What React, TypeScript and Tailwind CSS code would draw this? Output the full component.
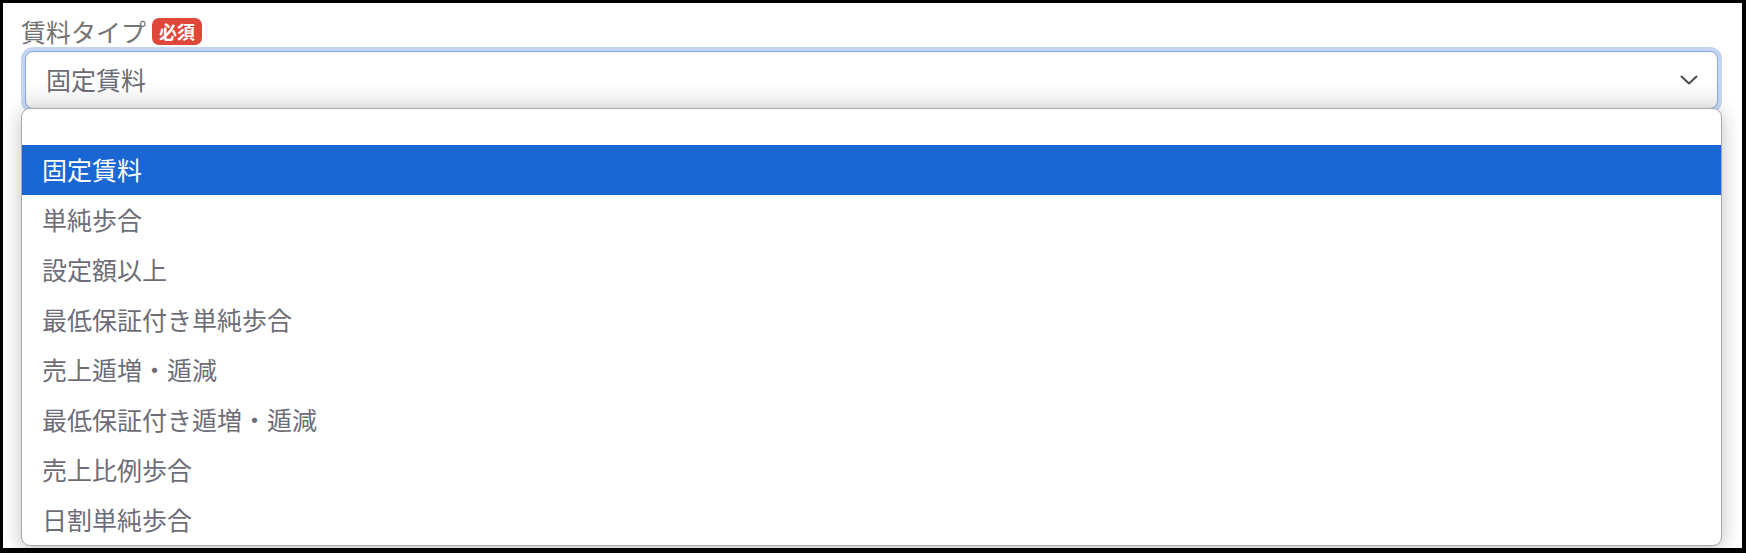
import React from "react";

const options = [
  "",
  "固定賃料",
  "単純歩合",
  "設定額以上",
  "最低保証付き単純歩合",
  "売上遁増・遁減",
  "最低保証付き遁増・遁減",
  "売上比例歩合",
  "日割単純歩合",
];

export default function App() {
  return (
    <div
      className="w-[1746px] h-[553px] bg-black pt-[3px] pl-[3px] pr-[4px] pb-[5px]"
      style={{ fontFamily: '"Noto Sans CJK JP", "Noto Sans", sans-serif' }}
    >
      <div className="relative w-full h-full bg-white overflow-hidden">
        <div className="flex flex-col pl-[18px] pr-[20px] pt-[13px]">
          <div className="flex items-center gap-[6px] h-[30px]">
            <span className="text-[25px] leading-[30px] text-[#737373]">賃料タイプ</span>
            <span className="flex items-center justify-center h-[27px] px-[7px] rounded-[7px] bg-[#e0473b] text-white text-[18px] font-bold leading-none">
              必須
            </span>
          </div>
          <div className="mt-[1px] rounded-[12px] p-[4px] bg-[#c3d5f1]">
            <div className="flex items-center justify-between h-[58px] rounded-[8px] border border-[#87a9df] bg-gradient-to-b from-white via-white to-[#f1f1f1] pl-[20px] pr-[19px]">
              <span className="text-[25px] text-[#6b6b73]">固定賃料</span>
              <svg width="18" height="10" viewBox="0 0 18 10" fill="none">
                <path d="M1.5 1.5 L9 8.5 L16.5 1.5" stroke="#4a4a4f" strokeWidth="2" strokeLinecap="round" strokeLinejoin="round" />
              </svg>
            </div>
          </div>
        </div>
        <div className="absolute left-[18px] top-[105px] w-[1701px] h-[438px] rounded-[9px] border border-[#a9a9a9] bg-white overflow-hidden shadow-[0_4px_20px_rgba(0,0,0,0.25)]">
          <div className="-mt-[14px]">
            {options.map((o, i) => (
              <div
                key={i}
                className={
                  i === 1
                    ? "h-[50px] flex items-center pl-[20px] bg-[#1a66d3] text-white text-[25px]"
                    : "h-[50px] flex items-center pl-[20px] text-[#6d6d78] text-[25px]"
                }
              >
                {o}
              </div>
            ))}
          </div>
        </div>
      </div>
    </div>
  );
}
